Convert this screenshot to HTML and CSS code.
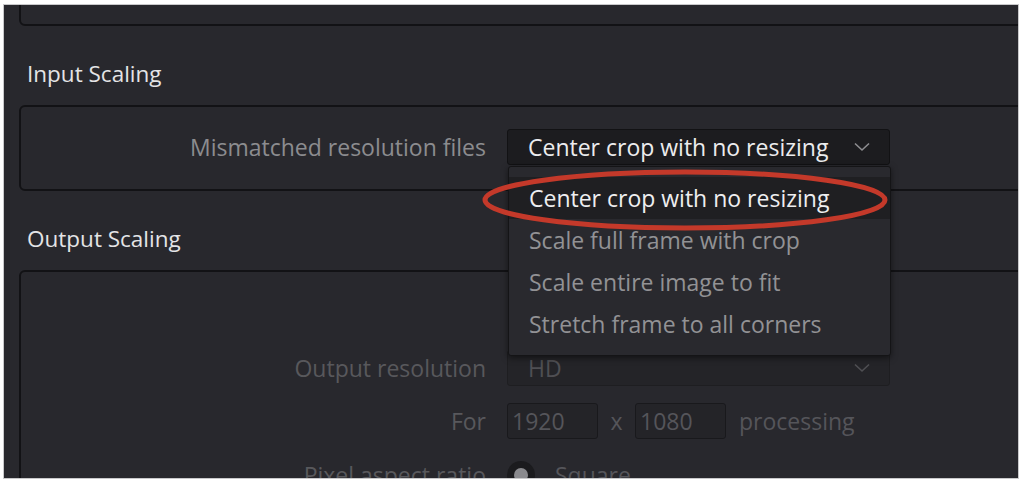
FILE: index.html
```html
<!DOCTYPE html>
<html>
<head>
<meta charset="utf-8">
<link rel="stylesheet" href="styles.css">
</head>
<body>
<div class="frame">
  <div class="box box-top"></div>

  <h2 class="section-title title-input">Input Scaling</h2>
  <div class="box box-input">
    <div class="row row-input">
      <span class="label">Mismatched resolution files</span>
      <div class="select select-active">
        <span class="select-value">Center crop with no resizing</span>
        <svg class="chevron" width="18" height="10" viewBox="0 0 18 10"><path d="M2 1.5 L9 8 L16 1.5" fill="none" stroke="currentColor" stroke-width="1.6"/></svg>
        <ul class="menu">
          <li class="menu-item selected">Center crop with no resizing</li>
          <li class="menu-item">Scale full frame with crop</li>
          <li class="menu-item">Scale entire image to fit</li>
          <li class="menu-item">Stretch frame to all corners</li>
        </ul>
      </div>
    </div>
  </div>

  <h2 class="section-title title-output">Output Scaling</h2>
  <div class="box box-output">
    <div class="row row-res">
      <span class="label dim">Output resolution</span>
      <div class="select select-dim">
        <span class="select-value">HD</span>
        <svg class="chevron" width="18" height="10" viewBox="0 0 18 10"><path d="M2 1.5 L9 8 L16 1.5" fill="none" stroke="currentColor" stroke-width="1.6"/></svg>
      </div>
    </div>
    <div class="row row-for">
      <span class="label dim">For</span>
      <div class="inline-fields">
        <span class="field">1920</span>
        <span class="times">x</span>
        <span class="field">1080</span>
        <span class="suffix">processing</span>
      </div>
    </div>
    <div class="row row-par">
      <span class="label dim">Pixel aspect ratio</span>
      <div class="inline-fields">
        <span class="radio"><span class="radio-dot"></span></span>
        <span class="radio-label">Square</span>
      </div>
    </div>
  </div>

  <svg class="highlight-ring" width="420" height="76" viewBox="0 0 420 76">
    <ellipse cx="203" cy="35" rx="200" ry="28" fill="none" stroke="#c4392a" stroke-width="5"/>
  </svg>
</div>
</body>
</html>
```
FILE: styles.css
```css
* { box-sizing: border-box; margin: 0; padding: 0; }

html, body {
  background: #ffffff;
}

body {
  padding: 4px 0 0 3px;
  font-family: "Open Sans", "Noto Sans", sans-serif;
}

.frame {
  position: relative;
  width: 1016px;
  height: 475px;
  border: 1px solid #c9c9cb;
  background: #28282d;
  overflow: hidden;
  display: flex;
  flex-direction: column;
}

.box {
  margin-left: 15px;
  margin-right: -40px;
  border: 2px solid #121215;
  border-radius: 6px;
  flex: none;
}

.box-top {
  margin-top: -30px;
  height: 51px;
}

.section-title {
  font-weight: 400;
  font-size: 22.5px;
  color: #e4e4e6;
  margin-left: 23px;
  line-height: 28px;
}

.title-input { margin-top: 34px; }
.title-output { margin-top: 34px; }

.box-input {
  margin-top: 17px;
  height: 86px;
  padding-top: 22px;
}

.box-output {
  margin-top: 17px;
  flex: 1 0 auto;
  padding-top: 78px;
}

.row {
  display: grid;
  grid-template-columns: 465px 383px;
  column-gap: 21px;
  align-items: center;
}

.label {
  text-align: right;
  font-size: 23px;
  color: #8c8c8f;
  white-space: nowrap;
}

.label.dim { color: #58585c; }

.select {
  position: relative;
  height: 36px;
  border-radius: 3px;
  display: flex;
  align-items: center;
  justify-content: space-between;
  padding: 0 18px 0 20px;
  font-size: 23px;
}

.select-active {
  background: #1c1c1f;
  border: 1px solid #121214;
  color: #ececee;
}

.select-active .chevron { color: #8d8d90; }

.select-dim {
  background: #242428;
  border: 1px solid #1e1e21;
  color: #4f4f53;
}

.select-dim .chevron { color: #4f4f53; }

.select-value { white-space: nowrap; }

.menu {
  position: absolute;
  left: 0;
  top: 36px;
  width: 383px;
  list-style: none;
  background: #29292e;
  border: 1px solid #141416;
  border-radius: 3px;
  padding: 10px 0 10px;
  box-shadow: 0 2px 6px rgba(0,0,0,0.5);
  z-index: 2;
}

.menu-item {
  height: 42px;
  line-height: 42px;
  padding-left: 20px;
  font-size: 23px;
  color: #929295;
  white-space: nowrap;
}

.menu-item.selected {
  background: #1f1f22;
  color: #eeeef0;
}

.row-for { margin-top: 17px; }
.row-par { margin-top: 20px; }

.inline-fields {
  display: flex;
  align-items: center;
  font-size: 23px;
  color: #55555a;
}

.field {
  width: 91px;
  height: 36px;
  line-height: 34px;
  background: #242428;
  border: 1px solid #19191c;
  border-radius: 3px;
  padding-left: 4px;
}

.times {
  width: 37px;
  text-align: center;
}

.suffix { margin-left: 13px; }

.radio {
  width: 28px;
  height: 28px;
  border-radius: 50%;
  background: #1b1b1e;
  display: flex;
  align-items: center;
  justify-content: center;
}

.radio-dot {
  width: 14px;
  height: 14px;
  border-radius: 50%;
  background: #8a8a8e;
}

.radio-label { margin-left: 20px; }

.highlight-ring {
  position: absolute;
  left: 478px;
  top: 160px;
  z-index: 3;
}
```
